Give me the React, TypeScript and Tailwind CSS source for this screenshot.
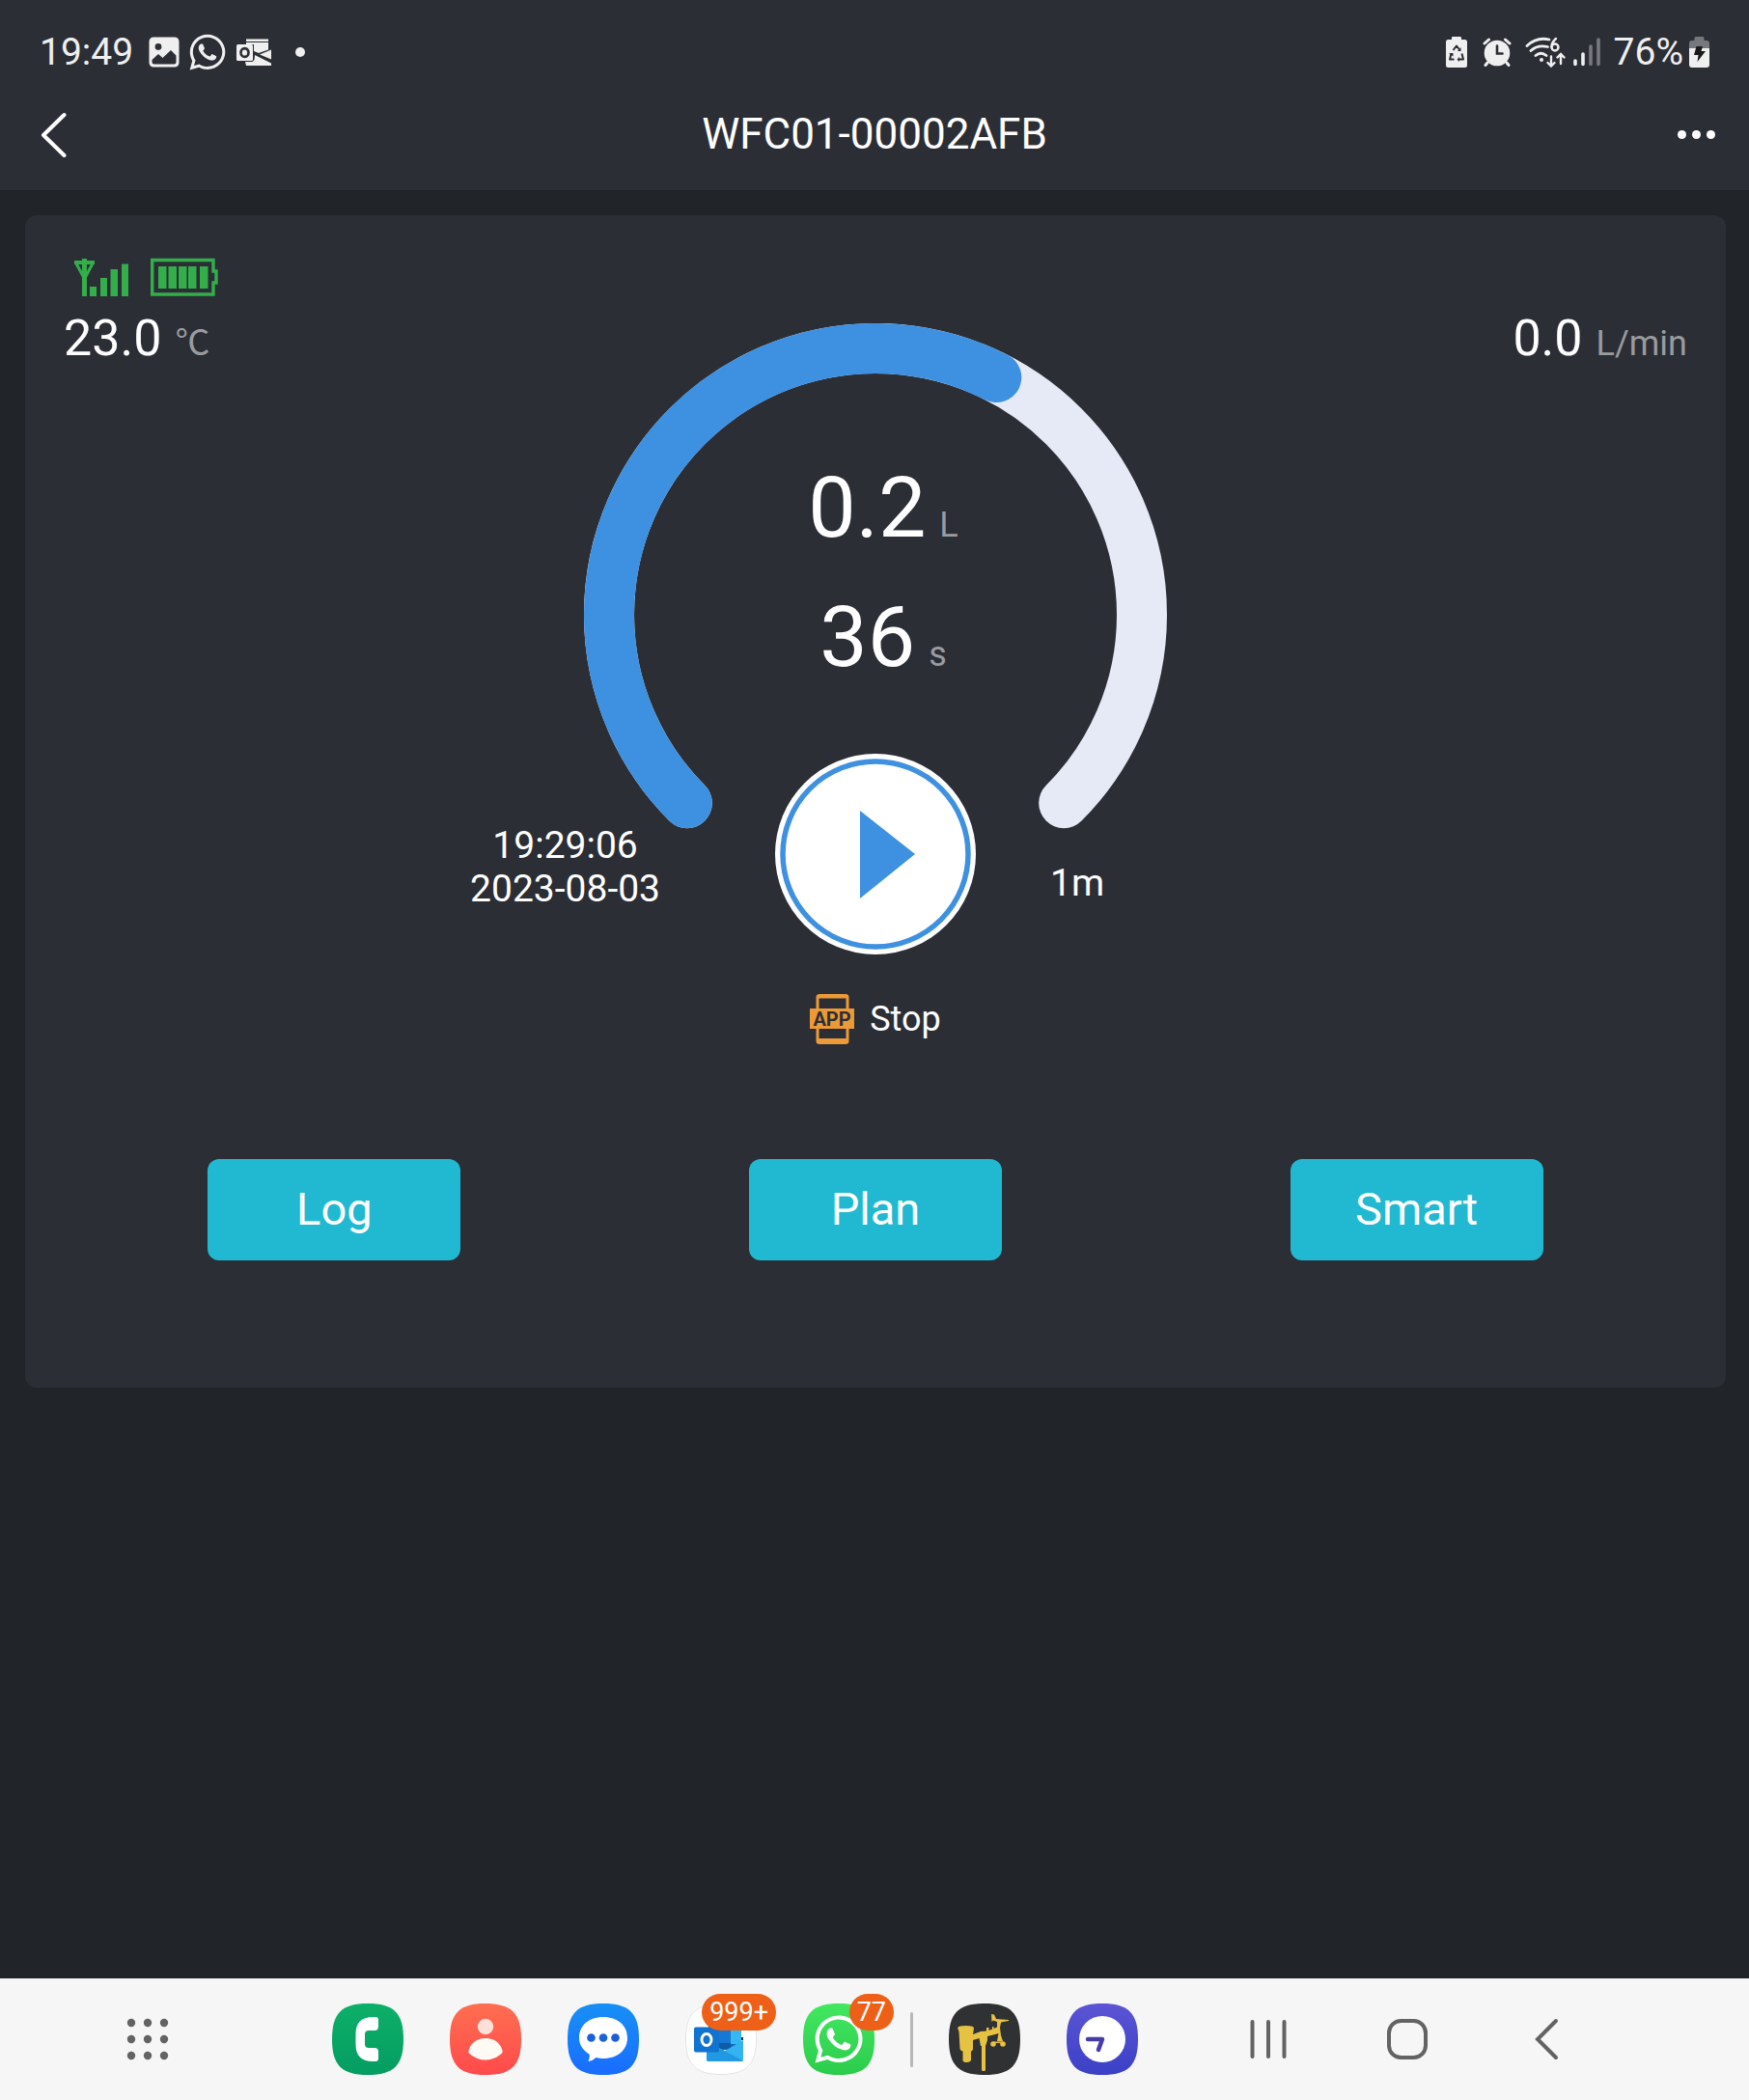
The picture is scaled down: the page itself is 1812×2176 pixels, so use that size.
import { FaWhatsapp } from "react-icons/fa";
import type { ReactNode } from "react";

const TRACK = "#e5eaf6";
const BLUE = "#3e91e0";

// Gauge geometry: 270 degree sweep that starts at the lower left
const SIZE = 604;
const RADIUS = 276;
const CENTER = SIZE / 2;

function pointAt(deg: number) {
  const rad = (deg * Math.PI) / 180;
  return `${CENTER + RADIUS * Math.sin(rad)} ${CENTER - RADIUS * Math.cos(rad)}`;
}

function arc(from: number, to: number) {
  const large = to - from > 180 ? 1 : 0;
  return `M${pointAt(from)}A${RADIUS} ${RADIUS} 0 ${large} 1 ${pointAt(to)}`;
}

function Gauge({ value }: { value: number }) {
  return (
    <svg viewBox="0 0 604 524" className="w-[604px] h-[524px]" fill="none" strokeWidth="52" strokeLinecap="round" aria-hidden>
      <path d={arc(-135, 135)} stroke={TRACK} />
      <path d={arc(-135, -135 + 270 * value)} stroke={BLUE} />
    </svg>
  );
}

function StatusBar() {
  return (
    <div className="flex items-center justify-between h-[108px] px-[41px] text-[39px] text-[#efefef]">
      <div className="flex items-center">
        <span>19:49</span>
        <svg viewBox="0 0 32 32" className="w-8 h-8 ml-4" aria-hidden>
          <path
            fill="#efefef"
            fillRule="evenodd"
            d="M5 0.500H27A4.500 4.500 0 0 1 31.500 5V27A4.500 4.500 0 0 1 27 31.500H5A4.500 4.500 0 0 1 0.500 27V5A4.500 4.500 0 0 1 5 .5ZM10 7A3.400 3.400 0 1 0 10 13.800A3.400 3.400 0 1 0 10 7ZM3.500 24V26A2.500 2.500 0 0 0 6 28.500H26A2.500 2.500 0 0 0 28.500 26V19.500L23 14L14.500 22L10 18Z"
          />
        </svg>
        <FaWhatsapp className="w-[42px] h-[42px] ml-2" />
        <svg viewBox="0 0 38 30" className="w-[38px] h-[30px] ml-2" aria-hidden>
          <path fill="#efefef" d="M11 1.500H34V4H11ZM11 5H34V12.500L24 16L19 14V7H11ZM37 12.500V22.500L25 17.500ZM20 18L37 26.500V29H11L10 25H17.500L19.500 23Z" />
          <rect x="1" y="7" width="17" height="17" rx="1.500" fill="#efefef" />
          <ellipse cx="9.500" cy="15.500" rx="4" ry="4.400" fill="none" stroke="#2c2e36" strokeWidth="2.600" />
        </svg>
        <span className="w-[10px] h-[10px] ml-6 rounded-full bg-[#efefef]" />
      </div>

      <div className="flex items-center">
        <svg viewBox="0 0 22 32" className="w-[22px] h-8" aria-hidden>
          <path fill="#efefef" d="M7 0H15Q16 0 16 1V3H19.500Q22 3 22 5.500V29.500Q22 32 19.500 32H2.500Q0 32 0 29.500V5.500Q0 3 2.500 3H6V1Q6 0 7 0Z" />
          <path d="M7.500 14L11 9.500L14.500 14M16.500 17.500L18 23.500H13.500M8.500 23.500H4L5.500 17.500" fill="none" stroke="#2c2e36" strokeWidth="2" strokeLinejoin="round" />
          <path d="M15.500 11V15H12ZM14 21V26L11.500 23.500ZM3 17H7.500V20.500Z" fill="#2c2e36" />
        </svg>
        <svg viewBox="0 0 30 30" className="w-[30px] h-[30px] ml-4" aria-hidden>
          <circle cx="15" cy="16" r="13.300" fill="#efefef" />
          <path d="M2 6L6.500 2M28 6L23.500 2M5 26L3 28.500M25 26L27 28.500" stroke="#efefef" strokeWidth="3" strokeLinecap="round" />
          <path d="M15 8.500V16.500H20.500" fill="none" stroke="#2c2e36" strokeWidth="2.600" strokeLinecap="round" />
        </svg>
        <svg viewBox="0 0 42 32" className="w-[42px] h-8 ml-[14px]" fill="none" stroke="#efefef" strokeWidth="2.800" strokeLinecap="round" aria-hidden>
          <path d="M2 9.500Q12 0 25 3M6 14.500Q13 8 23.500 10.500M11 19.500Q16.500 15 22 19.500" />
          <path d="M32 2Q27.500 6 27.500 10.500" strokeWidth="2.400" />
          <circle cx="31" cy="11" r="3.500" strokeWidth="2.400" />
          <circle cx="17" cy="24" r="2" fill="#efefef" stroke="none" />
          <path d="M27 20.500V30M23.500 27L27 30.500L30.500 27M37 28V18.500M33.500 21.500L37 18L40.500 21.500" strokeWidth="2.400" />
        </svg>
        <svg viewBox="0 0 28 30" className="w-7 h-[30px] ml-2" strokeWidth="3.600" strokeLinecap="round" aria-hidden>
          <path d="M2 24V27.500M10 17V27.500" stroke="#efefef" />
          <path d="M18 9V27.500M26 2V27.500" stroke="#77787d" />
        </svg>
        <span className="ml-[14px]">76%</span>
        <svg viewBox="0 0 21 32" className="w-[21px] h-8 ml-[6px]" aria-hidden>
          <path d="M7 0H14Q15.500 0 15.500 1.500V4H18Q21 4 21 7V12H0V7Q0 4 3 4H5.500V1.500Q5.500 0 7 0Z" fill="#77787d" />
          <path d="M0 12H21V29Q21 32 18 32H3Q0 32 0 29Z" fill="#efefef" />
          <path d="M7.500 10H14L12.500 15H17L8.500 26L9.500 19H5Z" fill="#1a1a1a" />
        </svg>
      </div>
    </div>
  );
}

function TitleBar() {
  return (
    <div className="grid grid-cols-[1fr_auto_1fr] items-center h-[62px] px-[35px] text-white">
      <button aria-label="Back" className="justify-self-start">
        <svg viewBox="0 0 36 48" className="w-9 h-12" fill="none" stroke="#fff" strokeWidth="4" strokeLinecap="round" strokeLinejoin="round" aria-hidden>
          <path d="M31.500 4L10 25L31.500 46" />
        </svg>
      </button>
      <h1 className="text-[44px] leading-[52px]">WFC01-00002AFB</h1>
      <button aria-label="More" className="flex gap-[6px] justify-self-end">
        <span className="w-[9px] h-[9px] rounded-full bg-white" />
        <span className="w-[9px] h-[9px] rounded-full bg-white" />
        <span className="w-[9px] h-[9px] rounded-full bg-white" />
      </button>
    </div>
  );
}

function Reading({ value, unit }: { value: string; unit: string }) {
  return (
    <p className="flex items-baseline gap-[14px] text-[52px] leading-[60px] text-white">
      {value}
      <span className="text-[36px] leading-none text-[#9a9b9f]">{unit}</span>
    </p>
  );
}

function GaugeReading({ value, unit }: { value: string; unit: string }) {
  return (
    <p className="flex items-baseline gap-[14px] text-[88px] leading-[134px] text-white">
      {value}
      <span className="text-[36px] leading-none text-[#9a9b9f]">{unit}</span>
    </p>
  );
}

function DeviceCard() {
  return (
    <section className="ml-[26px] mr-6 mt-[26px] pb-[132px] rounded-xl bg-[#2c2e36]">
      <div className="flex items-end justify-between pt-[44px] px-10">
        <div className="flex flex-col gap-[14px]">
          <div className="flex gap-[22px] pl-[10px]">
            <svg viewBox="0 0 58 40" className="w-[58px] h-10" fill="#34ad4b" aria-label="Signal">
              <path d="M1 5H22" stroke="#34ad4b" strokeWidth="4" />
              <path d="M2.500 5L11.500 22L20.500 5" fill="none" stroke="#34ad4b" strokeWidth="3" />
              <path d="M9 1H14V40H9ZM17 30H24V40H17ZM28 21H35V40H28ZM38.500 12H46V40H38.500ZM50 6.500H57V40H50Z" />
            </svg>
            <svg viewBox="0 0 70 40" className="w-[70px] h-10" fill="#34ad4b" aria-label="Battery">
              <path d="M1.700 2.500H65V14H68V26H65V38H1.700Z" fill="none" stroke="#34ad4b" strokeWidth="3.400" />
              <path d="M8 9H16.500V32H8ZM18.500 9H27V32H18.500ZM29 9H37.500V32H29ZM39 9H47.500V32H39ZM51 9H59.500V32H51Z" />
            </svg>
          </div>
          <Reading value="23.0" unit="℃" />
        </div>
        <Reading value="0.0" unit="L/min" />
      </div>

      {/* readings sit inside the ring */}
      <div className="grid justify-items-center -mt-[46px]">
        <div className="col-start-1 row-start-1">
          <Gauge value={36 / 60} />
        </div>
        <div className="col-start-1 row-start-1 flex flex-col items-center pt-[124px] pl-4">
          <GaugeReading value="0.2" unit="L" />
          <GaugeReading value="36" unit="s" />
        </div>
      </div>

      <div className="grid grid-cols-[1fr_auto_1fr] items-start -mt-[78px] text-[39px] leading-[45px] text-white">
        <p className="justify-self-end pt-[73px] pr-[119px] text-center">
          19:29:06
          <br />
          2023-08-03
        </p>
        <button aria-label="Play" className="rounded-full">
          <svg viewBox="0 0 208 208" className="block w-52 h-52" aria-hidden>
            <circle cx="104" cy="104" r="104" fill="#fff" />
            <circle cx="104" cy="104" r="96" fill="none" stroke={BLUE} strokeWidth="5.500" />
            <path d="M88 59L145 104L88 150Z" fill={BLUE} />
          </svg>
        </button>
        <p className="pt-[112px] pl-[77px]">1m</p>
      </div>

      <div className="flex items-center justify-center gap-4 mt-[40px] text-[36px] text-white">
        <svg viewBox="0 0 46 52" className="w-[46px] h-[52px]" aria-hidden>
          <rect x="8" y="1.500" width="31" height="49" rx="2" fill="none" stroke="#ec9a38" strokeWidth="3" />
          <path d="M7 1H40V4.500H7ZM7 46H40V51H7ZM0 15H46V36H0Z" fill="#ec9a38" />
          <text x="23" y="33" textAnchor="middle" fontSize="20" fontWeight="700" fontFamily="Roboto, sans-serif" fill="#2c2e36">
            APP
          </text>
        </svg>
        Stop
      </div>

      <div className="grid grid-cols-3 justify-items-center mt-[118px] px-10">
        {["Log", "Plan", "Smart"].map((label) => (
          <button key={label} className="w-[262px] h-[105px] rounded-xl bg-[#21b9d1] text-[47px] text-white">
            {label}
          </button>
        ))}
      </div>
    </section>
  );
}

function AppIcon({ label, from, to, badge, children }: { label: string; from: string; to: string; badge?: string; children: ReactNode }) {
  const id = `bg-${label}`;
  return (
    <button aria-label={label} className="relative">
      <svg viewBox="0 0 74 74" className="block w-[74px] h-[74px]" aria-hidden>
        <defs>
          <linearGradient id={id} x1="0" y1="0" x2="0" y2="1">
            <stop offset="0" stopColor={from} />
            <stop offset="1" stopColor={to} />
          </linearGradient>
        </defs>
        <path d="M37 0C64 0 74 10 74 37S64 74 37 74S0 64 0 37S10 0 37 0Z" fill={`url(#${id})`} />
        {children}
      </svg>
      {badge && (
        <span className="absolute -top-[10px] -right-5 px-2 rounded-full bg-[#ee5f18] text-[27px] leading-[38px] text-white">
          {badge}
        </span>
      )}
    </button>
  );
}

function Taskbar() {
  return (
    <nav className="flex items-center h-[126px] pl-[129px] bg-[#f6f6f6]">
      <button aria-label="All apps">
        <svg viewBox="0 0 48 48" className="block w-12 h-12" fill="#636363" aria-hidden>
          {[7, 24, 41].map((y) => [7, 24, 41].map((x) => <circle key={`${x}-${y}`} cx={x} cy={y} r="4.200" />))}
        </svg>
      </button>

      <div className="flex items-center gap-12 ml-[167px]">
        <AppIcon label="Phone" from="#0db068" to="#049c62">
          <path d="M43 14H45Q48 14 48 17V24Q48 28 44 28H38Q34 28 34 32V42Q34 46 38 46H44Q48 46 48 50V57Q48 60 45 60H43C30 60 24.500 54 24.500 42V32C24.500 20 30 14 43 14Z" fill="#fff" />
        </AppIcon>
        <AppIcon label="Contacts" from="#ff6f50" to="#ff4a4c">
          <circle cx="37" cy="24" r="8.200" fill="#ffe0d9" />
          <path d="M37 36C47 36 53 42 54.500 49Q55 51 53 52.500Q46 58.500 37 58.500T21 52.500Q19 51 19.500 49C21 42 27 36 37 36Z" fill="#fffaf3" />
        </AppIcon>
        <AppIcon label="Messages" from="#1790f5" to="#196cff">
          <path d="M37 14C52 14 62 23 62 35.500S52 57 37 57Q33 57 29.500 56Q26 59.500 21.500 60Q23.500 56 22.500 52.500C15 48 12 42 12 35.500C12 23 22 14 37 14Z" fill="#fff" />
          <circle cx="24.500" cy="35.500" r="4.300" fill="#1b5fd9" />
          <circle cx="37" cy="35.500" r="4.300" fill="#1b5fd9" />
          <circle cx="49.500" cy="35.500" r="4.300" fill="#1b5fd9" />
        </AppIcon>
        <AppIcon label="Outlook" from="#ffffff" to="#ffffff" badge="999+">
          <path d="M37 .5C63.500 .5 73.500 10.500 73.500 37S63.500 73.500 37 73.500S.5 63.500 .5 37S10.500 .5 37 .5Z" fill="none" stroke="#e2e2e2" />
          <path d="M24 22H58V48H24Z" fill="#1268bd" />
          <path d="M35 22H47V42H35Z" fill="#1478d4" />
          <path d="M47 22H58V42H47Z" fill="#35b8f1" />
          <path d="M35 41H47V47H35Z" fill="#0f5ba6" />
          <path d="M58 35H60V38H58Z" fill="#12304f" />
          <path d="M22 58V40L41 49L60 38V58Q60 60 58 60H24Q22 60 22 58Z" fill="#33b4f0" />
          <path d="M22 39L60 59.500L58 60H24Q22 60 22 58Z" fill="#2199e2" />
          <rect x="9" y="24.500" width="26" height="26" rx="2" fill="#1173d0" />
          <ellipse cx="22" cy="37.500" rx="5" ry="6" fill="none" stroke="#fff" strokeWidth="2.800" />
        </AppIcon>
        <AppIcon label="WhatsApp" from="#43e760" to="#2bcc4c" badge="77">
          <FaWhatsapp x="9" y="9" size={56} color="#fff" />
        </AppIcon>
      </div>

      <span className="w-[3px] h-[57px] mx-[37px] rounded-full bg-[#b8b8b8]" />

      <div className="flex items-center gap-12">
        <AppIcon label="Weather" from="#2f3132" to="#2f3132">
          <g fill="#e6c243">
            <path d="M9 25Q10 23 17.500 23T26 25L25.500 29L25 32L33 29L39 28.500V25H41.500V28L45 26.500V24H46.500V26L50 24.500V19L46 17.500L44.500 19L44 11L47 11.500L49 16L62 17V18L54 19.500L53 25L54 33L56 39H50L51.500 31L46 32.500L40 34V38L38 44H33L31.500 36L25 38V47Q25 49 23 49.500V59Q22 61 18.500 61T14.500 59V49.500Q12 49 11.500 47L10.500 29Z" />
            <rect x="34" y="40" width="4" height="30" rx="1.500" />
            <circle cx="46" cy="42" r="2.800" />
            <circle cx="56" cy="42" r="2.800" />
            <path d="M46 39.500H56V41H46Z" />
          </g>
        </AppIcon>
        <AppIcon label="Browser" from="#5c55d5" to="#3a40c6">
          <circle cx="37" cy="37" r="24" fill="#fff" />
          <path d="M22 37H37L33 48" fill="none" stroke="#473da8" strokeWidth="4.500" strokeLinecap="round" strokeLinejoin="round" />
        </AppIcon>
      </div>

      <div className="flex items-center gap-24 ml-[111px]">
        <button aria-label="Recents">
          <svg viewBox="0 0 48 48" className="block w-12 h-12" stroke="#636363" strokeWidth="4" strokeLinecap="round" aria-hidden>
            <path d="M7.500 6V42M24 6V42M40.500 6V42" />
          </svg>
        </button>
        <button aria-label="Home">
          <svg viewBox="0 0 48 48" className="block w-12 h-12" fill="none" stroke="#636363" strokeWidth="4" aria-hidden>
            <rect x="5" y="5" width="38" height="38" rx="12.500" />
          </svg>
        </button>
        <button aria-label="Go back">
          <svg viewBox="0 0 48 48" className="block w-12 h-12" fill="none" stroke="#636363" strokeWidth="4" strokeLinecap="round" aria-hidden>
            <path d="M34 5L15 24L34 43" />
          </svg>
        </button>
      </div>
    </nav>
  );
}

export default function App() {
  return (
    <div className="flex flex-col min-h-screen bg-[#212429] font-[Roboto,'Noto_Sans_CJK_SC',sans-serif]">
      <header className="pb-[27px] bg-[#2c2e36]">
        <StatusBar />
        <TitleBar />
      </header>
      <main className="flex-1">
        <DeviceCard />
      </main>
      <Taskbar />
    </div>
  );
}
